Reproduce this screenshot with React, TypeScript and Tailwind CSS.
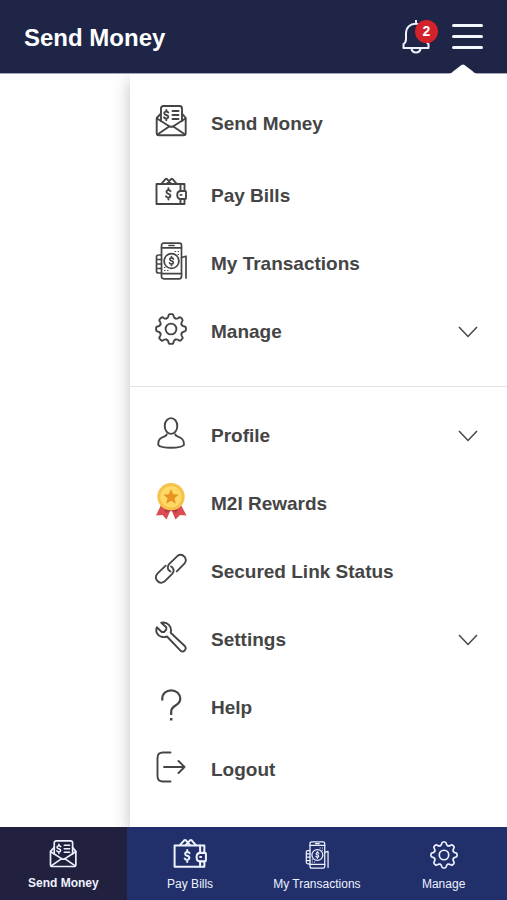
import { ReactNode } from "react";

type IconProps = { className?: string };

type MenuItem = {
  label: string;
  icon: ReactNode;
  expandable?: boolean;
  rowClass?: string;
};

const stroke = {
  viewBox: "0 0 32 32",
  fill: "none",
  stroke: "currentColor",
  strokeWidth: 1.9,
  strokeLinecap: "round" as const,
  strokeLinejoin: "round" as const,
  "aria-hidden": true,
};

function EnvelopeIcon({ className }: IconProps) {
  return (
    <svg {...stroke} className={className}>
      <path d="M6 16V3.5Q6 1 8.500 1H24.500Q27 1 27 3.500V16" />
      <path d="M6 8.500L1.700 13V28Q1.700 30.300 4 30.300H28.500Q30.700 30.300 30.700 28V13L27 8.500" />
      <path d="M2 13.500L14.300 21.300Q16.300 22.300 18.300 21.300L30.500 13.500" />
      <path d="M2.500 29.500L14.500 21.300M30 29.500L18 21.300" />
      <path d="M13.300 7.500Q12.300 6.300 10.800 6.600Q9 7 9.300 8.500Q9.600 9.700 11.200 10Q13.300 10.500 13.300 12Q13.200 13.500 11.300 13.600Q9.800 13.600 9 12.400M11.300 5V6.500M11.300 13.600V15.200" />
      <path d="M17.500 6H23.500M17.500 10H23.500M17.500 14H23.500" />
    </svg>
  );
}

function WalletIcon({ className }: IconProps) {
  return (
    <svg {...stroke} className={className}>
      <path d="M25.500 14V7H1.500V27H25.500V22" />
      <path d="M29.500 14V7H25.500M29.500 22V27H25.500" />
      <path d="M6.500 6.700L10.500 2.200Q11.300 1.500 12.100 2.200L16 6.700M12 6.700L16 2.200Q16.800 1.500 17.600 2.200L21.500 6.700" />
      <path d="M30 14H26Q22.200 14 22.200 18Q22.200 22 26 22H30Q31 22 31 21V15Q31 14 30 14Z" />
      <path d="M25.500 17.900H26.500" />
      <path d="M15.500 14.200Q14.700 12.900 13.200 13.100Q11.300 13.500 11.500 15.100Q11.700 16.400 13.400 16.800Q15.500 17.300 15.400 19Q15.200 20.500 13.400 20.600Q11.800 20.600 11 19.300M13.400 11.300V13M13.400 20.700V22.500" />
    </svg>
  );
}

function PhoneIcon({ className }: IconProps) {
  return (
    <svg {...stroke} viewBox="0 0 32 38" strokeWidth={1.700} className={className}>
      <path d="M6.500 5V3.500Q6.500 1.200 8.800 1.200H24.200Q26.500 1.200 26.500 3.500V34.500Q26.500 36.800 24.200 36.800H8.800Q6.500 36.800 6.500 34.500V5" />
      <path d="M6.500 5.800H26.500M6.500 31.700H26.500M14 3.500H19" />
      <path d="M6.500 13H3.500Q1.500 13 1.500 15V29Q1.500 31 3.500 31H6.500M1.500 17.500H6.500M1.500 22H6.500M1.500 26.500H6.500" />
      <path d="M26.500 15.500L31 14.200V36" />
      <circle cx="16.500" cy="19" r="7.400" />
      <path d="M18.400 17Q17.700 15.700 16.300 15.900Q14.600 16.300 14.900 17.600Q15.200 18.700 16.600 18.900Q18.400 19.300 18.300 20.700Q18 22 16.500 22Q15.100 22 14.500 20.900M16.500 14.500V15.800M16.500 22V23.500" />
      <path
        d="M20 9.500H20.500M23 9.500H23.500M23 12.500H23.500M9.500 28.500H10M12.500 28.500H13M9.500 25.500H10"
        strokeWidth="1.200"
      />
    </svg>
  );
}

function GearIcon({ className }: IconProps) {
  return (
    <svg {...stroke} className={className}>
      <circle cx="16" cy="16" r="5.400" />
      {[0, 45, 90, 135, 180, 225, 270, 315].map((angle) => (
        <path
          key={angle}
          transform={`translate(16 16) rotate(${angle})`}
          d="M-4.400 -10.600Q-2.900 -11.200 -2.700 -12.600Q-2.500 -14.800 -1 -14.900H1Q2.500 -14.800 2.700 -12.600Q2.900 -11.200 4.400 -10.600"
        />
      ))}
    </svg>
  );
}

function ProfileIcon({ className }: IconProps) {
  return (
    <svg {...stroke} className={className}>
      <ellipse cx="16" cy="9" rx="6.300" ry="7.900" />
      <path d="M11.700 17.500Q11.500 18.500 9.500 19.300C5 21 3.300 22.500 3.300 26.500V28C6 31.700 26 31.700 28.900 28V26.500C28.900 22.500 27 21 22.500 19.300Q20.500 18.500 20.300 17.500" />
    </svg>
  );
}

function RewardIcon({ className }: IconProps) {
  return (
    <svg viewBox="0 0 32 38" aria-hidden="true" className={className}>
      <path d="M6 23L1 33.500L7.500 33L11.500 37.500L17 25Z" fill="#d94c4f" />
      <path d="M26 23L31.500 33.500L25 33L20.500 37.500L15 25Z" fill="#d94c4f" />
      <path d="M9 28L16 26.500L23 28L21 31Q16 27 11 31Z" fill="#b93844" />
      <circle cx="16" cy="14.700" r="13.700" fill="#f5c34c" />
      <circle cx="16" cy="14.700" r="10.600" fill="#ffd966" />
      <path
        d="M16 7L18.200 12.200L23.800 12.600L19.500 16.200L20.900 21.700L16 18.700L11.100 21.700L12.500 16.200L8.200 12.600L13.800 12.200Z"
        fill="#e8951f"
      />
    </svg>
  );
}

function LinkIcon({ className }: IconProps) {
  return (
    <svg {...stroke} viewBox="0 0 33 32" className={className}>
      <path d="M11 12.500L2.700 20.500Q-.8 24.300 2.200 28Q5.500 32 9.700 29L18 20.700Q20.500 17.500 18 14.500L16.500 13.300" />
      <path d="M22.500 18.500L30.300 10.500Q33.200 7 30.500 3.500Q27.200 -.3 23 2.700L14.500 11Q12.200 14 14 17L16 18.700" />
    </svg>
  );
}

function WrenchIcon({ className }: IconProps) {
  return (
    <svg {...stroke} className={className}>
      <path d="M6.300 1.700L11.300 6.300V8.500L9 11H6.800L1.800 6.300C.2 10.700 2.300 14.700 6.500 15.800Q9.500 16.500 12 15.500L25.500 29.700Q27.500 31.300 29.700 29.500Q31.500 27.300 30 25.300L15.700 11.700C17.200 5.700 12.500 .2 6.300 1.700Z" />
    </svg>
  );
}

function HelpIcon({ className }: IconProps) {
  return (
    <svg {...stroke} strokeWidth={2.200} strokeLinecap="butt" className={className}>
      <path d="M7.300 11.500V9.700C7.300 4.500 11.300 1.300 16.200 1.300C21.300 1.300 25.300 5 25.300 9.700C25.300 13 23.500 14.700 20.500 16.500C17.500 18.300 16.200 19.500 16.200 22.500V26" />
      <path d="M16.200 29V31.500" strokeWidth="2.500" />
    </svg>
  );
}

function LogoutIcon({ className }: IconProps) {
  return (
    <svg {...stroke} className={className}>
      <path d="M15.500 1.500H8Q2.500 1.500 2.500 7V25Q2.500 30.500 8 30.500H15.500" />
      <path d="M9 16H29.500M23.500 10L29.500 16L23.500 22" />
    </svg>
  );
}

function BellIcon({ className }: IconProps) {
  return (
    <svg
      viewBox="0 0 28 34"
      fill="none"
      stroke="currentColor"
      strokeWidth="2"
      strokeLinejoin="round"
      aria-hidden="true"
      className={className}
    >
      <path d="M14 0V4M1.500 28V24Q4 22.500 4 19V13.500C4 7.500 8 3.700 14 3.700C20 3.700 24 7.500 24 13.500V19Q24 22.500 26.500 24V28Z" />
      <path d="M9.300 28Q10 32.500 14 32.500Q18 32.500 18.700 28" />
    </svg>
  );
}

function ChevronIcon() {
  return (
    <svg
      viewBox="0 0 20 12"
      fill="none"
      stroke="currentColor"
      strokeWidth="1.500"
      aria-hidden="true"
      className="h-3 w-5"
    >
      <path d="M1 1L10 10.500L19 1" />
    </svg>
  );
}

const mainItems: MenuItem[] = [
  {
    label: "Send Money",
    icon: <EnvelopeIcon className="size-8" />,
    rowClass: "mb-1",
  },
  { label: "Pay Bills", icon: <WalletIcon className="size-8" /> },
  { label: "My Transactions", icon: <PhoneIcon className="h-[38px] w-8" /> },
  {
    label: "Manage",
    icon: <GearIcon className="size-8" />,
    expandable: true,
  },
];

const accountItems: MenuItem[] = [
  {
    label: "Profile",
    icon: <ProfileIcon className="size-8" />,
    expandable: true,
  },
  { label: "M2I Rewards", icon: <RewardIcon className="h-[38px] w-8" /> },
  { label: "Secured Link Status", icon: <LinkIcon className="size-8" /> },
  {
    label: "Settings",
    icon: <WrenchIcon className="size-8" />,
    expandable: true,
  },
  { label: "Help", icon: <HelpIcon className="size-8" /> },
];

const tabs = [
  { label: "Send Money", icon: <EnvelopeIcon className="size-7" /> },
  { label: "Pay Bills", icon: <WalletIcon className="size-[34px]" /> },
  { label: "My Transactions", icon: <PhoneIcon className="h-7 w-6" /> },
  { label: "Manage", icon: <GearIcon className="size-7" /> },
];

const rowBase =
  "flex w-full items-center pl-[25px] pr-[29px] text-left text-[19px] font-bold";

function MenuRow({ item }: { item: MenuItem }) {
  const content = (
    <>
      <span className="w-8 shrink-0 pb-1.5">{item.icon}</span>
      <span className="ml-6 grow">{item.label}</span>
      {item.expandable && <ChevronIcon />}
    </>
  );

  return (
    <li className={item.rowClass}>
      {item.expandable ? (
        <button
          type="button"
          aria-expanded="false"
          className={`${rowBase} h-[68px]`}
        >
          {content}
        </button>
      ) : (
        <a href="#" className={`${rowBase} h-[68px]`}>
          {content}
        </a>
      )}
    </li>
  );
}

export default function App() {
  return (
    <div className="flex min-h-screen flex-col bg-white font-['Liberation_Sans',Arial,sans-serif]">
      <header className="relative z-10 flex h-[74px] items-center justify-between border-b border-[#a5a8bb] bg-[#1e2547] px-6 text-white">
        <h1 className="pt-0.5 text-2xl font-bold">Send Money</h1>
        <div className="flex items-center gap-[22px]">
          <button
            type="button"
            aria-label="Notifications"
            className="relative text-[#eef4ff]"
          >
            <BellIcon className="h-[34px] w-7" />
            <span className="absolute -right-2 top-0 flex size-[23px] items-center justify-center rounded-full bg-[#d2232a] text-sm font-bold text-white">
              2
            </span>
          </button>
          <button
            type="button"
            aria-label="Menu"
            className="flex w-[31px] flex-col gap-2 text-white"
          >
            <span className="h-[3px] rounded-full bg-[#f4f8ff]"></span>
            <span className="h-[3px] rounded-full bg-[#f4f8ff]"></span>
            <span className="h-[3px] rounded-full bg-[#f4f8ff]"></span>
          </button>
        </div>
        <svg
          viewBox="0 0 28 10"
          fill="white"
          aria-hidden="true"
          className="absolute -bottom-px right-[30px] h-2.5 w-7"
        >
          <path d="M0 10Q2 9.500 4 7.500L12.500 1Q14 0 15.500 1L24 7.500Q26 9.500 28 10Z" />
        </svg>
      </header>

      <main className="flex grow justify-end overflow-hidden">
        <nav
          aria-label="Menu"
          className="w-[377px] max-w-full bg-white text-[#454545] shadow-[0_6px_16px_rgba(0,0,0,0.26)]"
        >
          <ul className="border-b border-[#e2e2e2] pb-5 pt-4">
            {mainItems.map((item) => (
              <MenuRow key={item.label} item={item} />
            ))}
          </ul>
          <ul className="pb-7 pt-[15px]">
            {accountItems.map((item) => (
              <MenuRow key={item.label} item={item} />
            ))}
            <li>
              <button type="button" className={`${rowBase} h-14`}>
                <span className="w-8 shrink-0 pb-1.5">
                  <LogoutIcon className="size-8" />
                </span>
                <span className="ml-6">Logout</span>
              </button>
            </li>
          </ul>
        </nav>
      </main>

      <nav
        aria-label="Tabs"
        className="relative z-10 grid h-[73px] grid-cols-4 bg-[#21306b] text-xs text-[#eef2ff]"
      >
        {tabs.map((tab, i) => (
          <a
            key={tab.label}
            href="#"
            aria-current={i === 0 ? "page" : undefined}
            className={
              i === 0
                ? "flex flex-col items-center bg-[#21203f] pt-[10px] font-bold"
                : "flex flex-col items-center pt-[11px]"
            }
          >
            <span className="flex h-[34px] items-center">{tab.icon}</span>
            <span className="mt-1 whitespace-nowrap">{tab.label}</span>
          </a>
        ))}
      </nav>
    </div>
  );
}
